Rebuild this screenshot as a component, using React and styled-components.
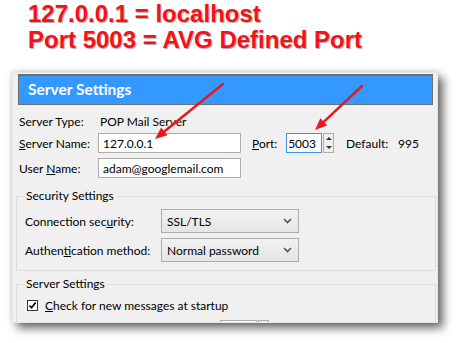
import React from "react";
import styled, { createGlobalStyle } from "styled-components";

const GlobalStyle = createGlobalStyle`
  html, body {
    margin: 0;
    padding: 0;
    background: #fff;
  }
  body {
    width: 459px;
    height: 343px;
    overflow: hidden;
    position: relative;
  }
`;

const Page = styled.div`
  width: 459px;
  height: 343px;
  position: relative;
`;

const Caption = styled.div`
  padding: 1px 0 0 28px;
  height: 72px;
  box-sizing: border-box;
  font-family: "Liberation Sans", Arial, sans-serif;
  font-weight: bold;
  font-size: 24px;
  line-height: 26px;
  color: #f4121a;
  text-shadow: 1px 1px 1px rgba(0, 0, 0, 0.35);
`;

const Window = styled.div`
  margin-left: 12px;
  width: 426px;
  height: 251px;
  overflow: hidden;
  background: #f0f0f0;
  border: 1px solid #e6e6e6;
  box-sizing: border-box;
  box-shadow: 5px 5px 9px rgba(0, 0, 0, 0.6), -1px -1px 5px rgba(0, 0, 0, 0.12);
  font-family: Lato, "Noto Sans", sans-serif;
  font-size: 12px;
  color: #000;
`;

const Header = styled.div`
  margin: 1px 4px 0 5px;
  height: 31px;
  box-sizing: border-box;
  background: #3399ff;
  border: 1px solid #6f6f6f;
  border-top-width: 2px;
  color: #fff;
  font-weight: bold;
  font-size: 15.5px;
  line-height: 27px;
  padding-left: 9px;
`;

const Fields = styled.div`
  display: flex;
  flex-direction: column;
  margin: 6px 0 0 6px;
`;

const Row = styled.div`
  display: flex;
  align-items: center;
  height: ${(p) => p.$h || 20}px;
  margin-top: ${(p) => p.$mt || 0}px;
`;

const Label = styled.span`
  width: ${(p) => p.$w}px;
  flex-shrink: 0;
  white-space: nowrap;
`;

const TextBox = styled.div`
  width: ${(p) => p.$w}px;
  height: 20px;
  box-sizing: border-box;
  background: #fff;
  border: 1px solid ${(p) => (p.$focus ? "#3d94e6" : "#acacac")};
  padding: 0 4px;
  display: flex;
  align-items: center;
  justify-content: ${(p) => (p.$right ? "flex-end" : "flex-start")};
  white-space: nowrap;
`;

const Caret = styled.span`
  display: inline-block;
  width: 1px;
  height: 14px;
  background: #000;
  margin-left: 1px;
`;

const Spinner = styled.div`
  width: 11px;
  height: 20px;
  box-sizing: border-box;
  border: 1px solid #acacac;
  background: #f0f0f0;
  display: flex;
  flex-direction: column;
  align-items: center;
  justify-content: space-around;
  margin: 0 12px 0 1px;
`;

const Tri = styled.span`
  width: 0;
  height: 0;
  border-left: 3px solid transparent;
  border-right: 3px solid transparent;
  ${(p) =>
    p.$down ? "border-top: 3px solid #333;" : "border-bottom: 3px solid #333;"}
`;

const Group = styled.fieldset`
  margin: ${(p) => p.$mt}px 0 0 3px;
  width: 420px;
  box-sizing: border-box;
  border: 1px solid #dcdcdc;
  padding: ${(p) => p.$pt}px 6px 8px 8px;
  display: flex;
  flex-direction: column;
  gap: 5px;
`;

const Legend = styled.legend`
  padding: 0 2px;
  margin-left: -1px;
  line-height: 16px;
`;

const Select = styled.div`
  width: 138px;
  height: 24px;
  box-sizing: border-box;
  border: 1px solid #acacac;
  background: linear-gradient(#f2f2f2, #e5e5e5);
  display: flex;
  align-items: center;
  justify-content: space-between;
  padding: 0 6px 0 5px;
`;

const Check = styled.span`
  width: 11px;
  height: 11px;
  box-sizing: border-box;
  border: 1px solid #333;
  background: #fff;
  margin: 0 7px 0 2px;
  display: flex;
  align-items: center;
  justify-content: center;
`;

const Arrows = styled.svg`
  position: absolute;
  left: 0;
  top: 0;
  pointer-events: none;
`;

const Chevron = () => (
  <svg width="9" height="6" viewBox="0 0 9 6">
    <path d="M1 1 L4.5 4.5 L8 1" fill="none" stroke="#555" strokeWidth="1.6" />
  </svg>
);

const Arrow = ({ x1, y1, x2, y2 }) => {
  const a = Math.atan2(y2 - y1, x2 - x1);
  const len = 12;
  const w = 5;
  const bx = x2 - len * Math.cos(a);
  const by = y2 - len * Math.sin(a);
  const px = -Math.sin(a) * w;
  const py = Math.cos(a) * w;
  return (
    <g>
      <line x1={x1} y1={y1} x2={bx} y2={by} stroke="#e8171d" strokeWidth="2.4" strokeLinecap="round" />
      <polygon
        points={`${x2},${y2} ${bx + px},${by + py} ${bx - px},${by - py}`}
        fill="#e8171d"
      />
    </g>
  );
};

export default function App() {
  return (
    <Page>
      <GlobalStyle />
      <Caption>
        <div>127.0.0.1 = localhost</div>
        <div>Port 5003 = AVG Defined Port</div>
      </Caption>
      <Window>
        <Header>Server Settings</Header>
        <Fields>
          <Row>
            <Label $w={81}>Server Type:</Label>
            <span>POP Mail Server</span>
          </Row>
          <Row $mt={2}>
            <Label $w={79}>
              <u>S</u>erver Name:
            </Label>
            <TextBox $w={143}>127.0.0.1</TextBox>
            <Label $w={34} style={{ marginLeft: 11 }}>
              <u>P</u>ort:
            </Label>
            <TextBox $w={36} $focus $right>
              5003
              <Caret />
            </TextBox>
            <Spinner>
              <Tri />
              <Tri $down />
            </Spinner>
            <Label $w={52}>Default:</Label>
            <span>995</span>
          </Row>
          <Row $mt={5}>
            <Label $w={79}>
              User <u>N</u>ame:
            </Label>
            <TextBox $w={143}>adam@googlemail.com</TextBox>
          </Row>
        </Fields>
        <Group $mt={10} $pt={5}>
          <Legend>Security Settings</Legend>
          <Row $h={24}>
            <Label $w={136}>
              Connection sec<u>u</u>rity:
            </Label>
            <Select>
              SSL/TLS
              <Chevron />
            </Select>
          </Row>
          <Row $h={24}>
            <Label $w={136}>
              Authen<u>t</u>ication method:
            </Label>
            <Select>
              Normal password
              <Chevron />
            </Select>
          </Row>
        </Group>
        <Group $mt={5} $pt={3}>
          <Legend>Server Settings</Legend>
          <Row>
            <Check>
              <svg width="9" height="9" viewBox="0 0 9 9">
                <path d="M1.5 4.5 L3.6 6.8 L7.6 1.6" fill="none" stroke="#000" strokeWidth="1.7" />
              </svg>
            </Check>
            <span>
              <u>C</u>heck for new messages at startup
            </span>
          </Row>
          <Row>
            <Label $w={195}>&nbsp;</Label>
            <TextBox $w={37} />
            <Spinner />
          </Row>
        </Group>
      </Window>
      <Arrows width="459" height="343">
        <Arrow x1={223} y1={84} x2={155} y2={139} />
        <Arrow x1={362} y1={86} x2={315} y2={130} />
      </Arrows>
    </Page>
  );
}
